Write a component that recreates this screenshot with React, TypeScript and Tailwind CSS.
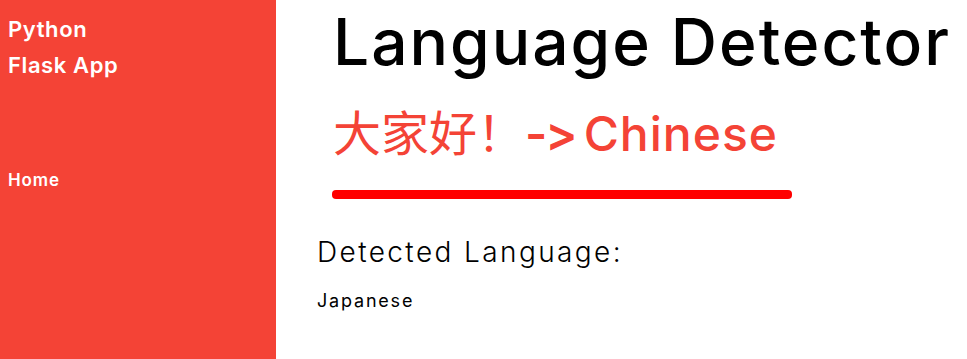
const font = { fontFamily: 'Inter, "Noto Sans", sans-serif', fontFeatureSettings: '"calt" 0' };

export default function App() {
  return (
    <div className="flex h-[359px] w-[967px] overflow-hidden bg-white" style={font}>
      <aside className="flex w-[276px] shrink-0 flex-col bg-[#f44336] px-2 pt-[11px] text-white">
        <div className="text-[22px] font-semibold leading-[36px] tracking-[0.6px]">
          Python
          <br />
          Flask App
        </div>
        <nav className="mt-[85px]">
          <a className="text-[17px] font-semibold tracking-[0.9px]">Home</a>
        </nav>
      </aside>
      <main className="flex-1 pl-[41px]">
        <h1 className="ml-4 mt-[2px] text-[64px] font-medium leading-[80px] tracking-[2px] text-black">
          Language Detector
        </h1>
        <div className="ml-4 mt-[16px] flex items-baseline whitespace-pre text-[#f44336]">
          <span
            className="text-[48px] leading-[54px]"
            style={{ fontFamily: '"Noto Sans CJK SC", serif' }}
          >
            大家好！
          </span>
          <span className="text-[48px] font-semibold tracking-[-2px]">-&gt;</span>
          <span className="ml-[8px] text-[48px] font-medium tracking-[1px]">Chinese</span>
        </div>
        <div className="ml-[15px] mt-[20px] h-[9px] w-[460px] rounded bg-[#ff0000]" />
        <h2 className="mt-[36px] text-[28px] font-light leading-[34px] tracking-[2.4px] text-black">
          Detected Language:
        </h2>
        <p className="mt-[18px] text-[18px] tracking-[1.8px] text-black">Japanese</p>
      </main>
    </div>
  );
}
